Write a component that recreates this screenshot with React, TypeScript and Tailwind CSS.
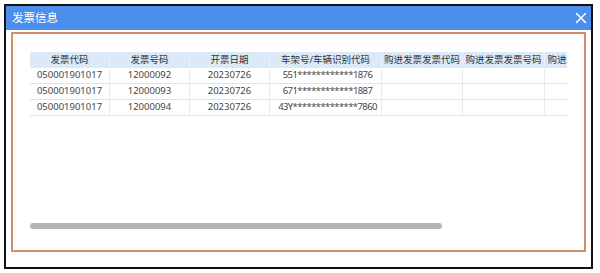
import React from 'react';

interface Row {
  code: string;
  number: string;
  date: string;
  vin: string;
}

const rows: Row[] = [
  { code: '050001901017', number: '12000092', date: '20230726', vin: '551************1876' },
  { code: '050001901017', number: '12000093', date: '20230726', vin: '671************1887' },
  { code: '050001901017', number: '12000094', date: '20230726', vin: '43Y**************7860' },
];

const columns = [
  { title: '发票代码', width: 'w-[80px]' },
  { title: '发票号码', width: 'w-[80px]' },
  { title: '开票日期', width: 'w-[80px]' },
  { title: '车架号/车辆识别代码', width: 'w-[112px]' },
  { title: '购进发票发票代码', width: 'w-[81px]' },
  { title: '购进发票发票号码', width: 'w-[82px]' },
  { title: '购进发票开票日期', width: 'w-[82px]' },
];

export default function App() {
  return (
    <div
      className="w-[600px] h-[273px] bg-white pl-[4px] pt-[4px] overflow-hidden"
      style={{ fontFamily: '"Noto Sans", "Noto Sans CJK SC", sans-serif' }}
    >
      <div className="w-[589px] h-[265px] border-2 border-[#111] bg-white flex flex-col">
        {/* 标题栏 */}
        <div className="h-[24px] bg-[#4b8eec] flex items-center justify-between pl-[6px] pr-[3px]">
          <span className="text-[11.5px] text-white leading-none">发票信息</span>
          <svg width="14" height="14" viewBox="0 0 14 14" className="text-white">
            <path d="M2.5 2.5 L11.5 11.5 M11.5 2.5 L2.5 11.5" stroke="currentColor" strokeWidth="1.6" strokeLinecap="round" />
          </svg>
        </div>

        {/* 内容区 */}
        <div className="pl-[5px] pt-[2px]">
          <div className="w-[575px] h-[220px] border-2 border-[#cf9068] bg-white pl-[17px] pt-[18px] flex flex-col">
            <div className="w-[537px] overflow-hidden">
              <div className="flex bg-[#dceaf8] h-[16px]">
                {columns.map((c) => (
                  <div
                    key={c.title}
                    className={`${c.width} shrink-0 flex items-center justify-center text-[9.5px] text-[#333] whitespace-nowrap border-r border-[#e8f0f8]`}
                  >
                    {c.title}
                  </div>
                ))}
              </div>
              {rows.map((r, i) => (
                <div key={i} className="flex h-[16px] border-b border-[#dde6ef]">
                  {[r.code, r.number, r.date, r.vin, '', '', ''].map((v, j) => (
                    <div
                      key={j}
                      className={`${columns[j].width} shrink-0 flex items-center justify-center text-[9.5px] text-[#444] whitespace-nowrap border-r border-[#e4ebf2] ${j === 3 ? 'tracking-[-0.6px] pl-[4px]' : ''}`}
                    >
                      {v}
                    </div>
                  ))}
                </div>
              ))}
            </div>

            {/* 横向滚动条 */}
            <div className="mt-[107px] w-[412px] h-[6px] rounded-full bg-[#b4b4b4]" />
          </div>
        </div>
      </div>
    </div>
  );
}
